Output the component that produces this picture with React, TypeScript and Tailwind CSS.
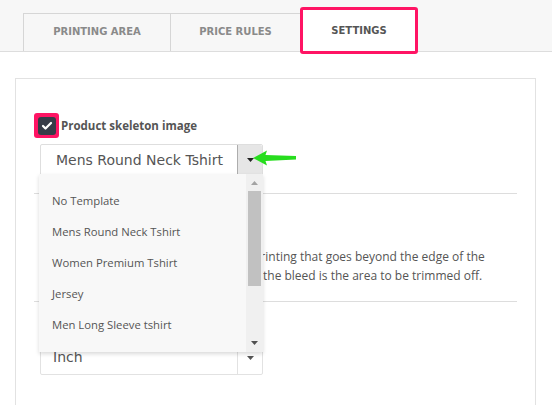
import { Check } from "lucide-react";

const items = ["No Template", "Mens Round Neck Tshirt", "Women Premium Tshirt", "Jersey", "Men Long Sleeve tshirt"];

const Caret = ({ className = "" }: { className?: string }) => (
  <svg width="7" height="4" viewBox="0 0 7 4" className={className}>
    <path d="M0 0h7L3.5 4z" fill="currentColor" />
  </svg>
);

const App = () => {
  return (
    <div className="h-[405px] w-[552px] overflow-hidden bg-white font-['Open_Sans',sans-serif]">
      {/* tabs */}
      <div className="flex h-[52px] items-end border-b border-[#dddddd] bg-[#f7f7f7] pl-[23px]">
        <div className="flex h-[38px] w-[148px] items-center justify-center border-x border-t border-[#d6d6d6] pb-[2px] font-['DejaVu_Sans',sans-serif] text-[10px] font-bold text-[#8a8a8a]">
          PRINTING AREA
        </div>
        <div className="flex h-[38px] w-[129px] items-center justify-center border-t border-[#d6d6d6] pb-[2px] font-['DejaVu_Sans',sans-serif] text-[10px] font-bold text-[#8a8a8a]">
          PRICE RULES
        </div>
        <div className="relative top-[3px] flex h-[47px] w-[118px] items-center justify-center rounded-[3px] border-[3px] border-[#ff1464] bg-white font-['DejaVu_Sans',sans-serif] text-[10px] font-bold text-[#555]">
          SETTINGS
        </div>
      </div>

      {/* panel */}
      <div className="pl-[15px] pr-[16px] pt-[26px]">
        <div className="relative h-[330px] border-x border-t border-[#e2e2e2]">
          <div className="pl-[18px] pt-[34px]">
            <div className="flex items-center gap-[2px]">
              <div className="flex h-[25px] w-[25px] items-center justify-center rounded-[3px] bg-[#ff1464]">
                <div className="flex h-[18px] w-[18px] items-center justify-center rounded-[3px] bg-[#363c48]">
                  <Check className="h-[12px] w-[12px] text-white" strokeWidth={4.5} />
                </div>
              </div>
              <span className="text-[11.5px] font-bold text-[#555]">Product skeleton image</span>
            </div>
          </div>

          <div className="ml-[24px] mt-[6px] flex h-[32px] w-[223px] items-stretch rounded-[2px] border border-[#dedede] bg-white">
            <div className="flex flex-1 items-center pl-[15px] font-['DejaVu_Sans',sans-serif] text-[14px] text-[#555]">
              Mens Round Neck Tshirt
            </div>
            <div className="flex w-[25px] items-center justify-center rounded-r-[2px] border-l border-[#adadad] bg-[#e6e6e6] text-[#222]">
              <Caret />
            </div>
          </div>

          <div className="mx-[18px] mt-[17px] border-t border-[#dddddd]" />

          <div className="pl-[24px] pt-[53px] text-[12px] leading-[19px] text-[#555]">
            <div className="whitespace-nowrap pl-[213px]">printing that goes beyond the edge of the</div>
            <div className="whitespace-nowrap pl-[223px]">the bleed is the area to be trimmed off.</div>
          </div>

          <div className="mx-[18px] mt-[16px] border-t border-[#dddddd]" />

          <div className="ml-[24px] mt-[38px] flex h-[35px] w-[223px] items-stretch rounded-[2px] border border-[#e2e2e2]">
            <div className="flex flex-1 items-center pl-[12px] font-['DejaVu_Sans',sans-serif] text-[14px] text-[#555]">
              Inch
            </div>
            <div className="flex w-[25px] items-center justify-center border-l border-[#e2e2e2] text-[#555]">
              <Caret />
            </div>
          </div>

          {/* open dropdown list */}
          <div className="absolute left-[23px] top-[95px] flex h-[178px] w-[224px] bg-[#f8f8f8] shadow-[0_2px_4px_rgba(0,0,0,0.15)]">
            <div className="flex-1 pl-[13px] pt-[18px] text-[11.3px] text-[#555]">
              {items.map((item) => (
                <div key={item} className="h-[31px] leading-[18px]">
                  {item}
                </div>
              ))}
            </div>
            <div className="flex w-[17px] flex-col items-center bg-[#f0f0f0]">
              <Caret className="mt-[7px] rotate-180 text-[#a3a3a3]" />
              <div className="mt-[6px] h-[95px] w-[13px] bg-[#c1c1c1]" />
              <div className="flex-1" />
              <Caret className="mb-[7px] text-[#505050]" />
            </div>
          </div>

          {/* annotation arrow */}
          <svg className="absolute left-[236px] top-[70px]" width="46" height="18" viewBox="0 0 46 18">
            <path d="M1 9 L15 1.5 L13.5 6 L44 7 L44 10.5 L13.5 12 L15 16.5 Z" fill="#27dd1e" />
          </svg>
        </div>
      </div>
    </div>
  );
};

export default App;
